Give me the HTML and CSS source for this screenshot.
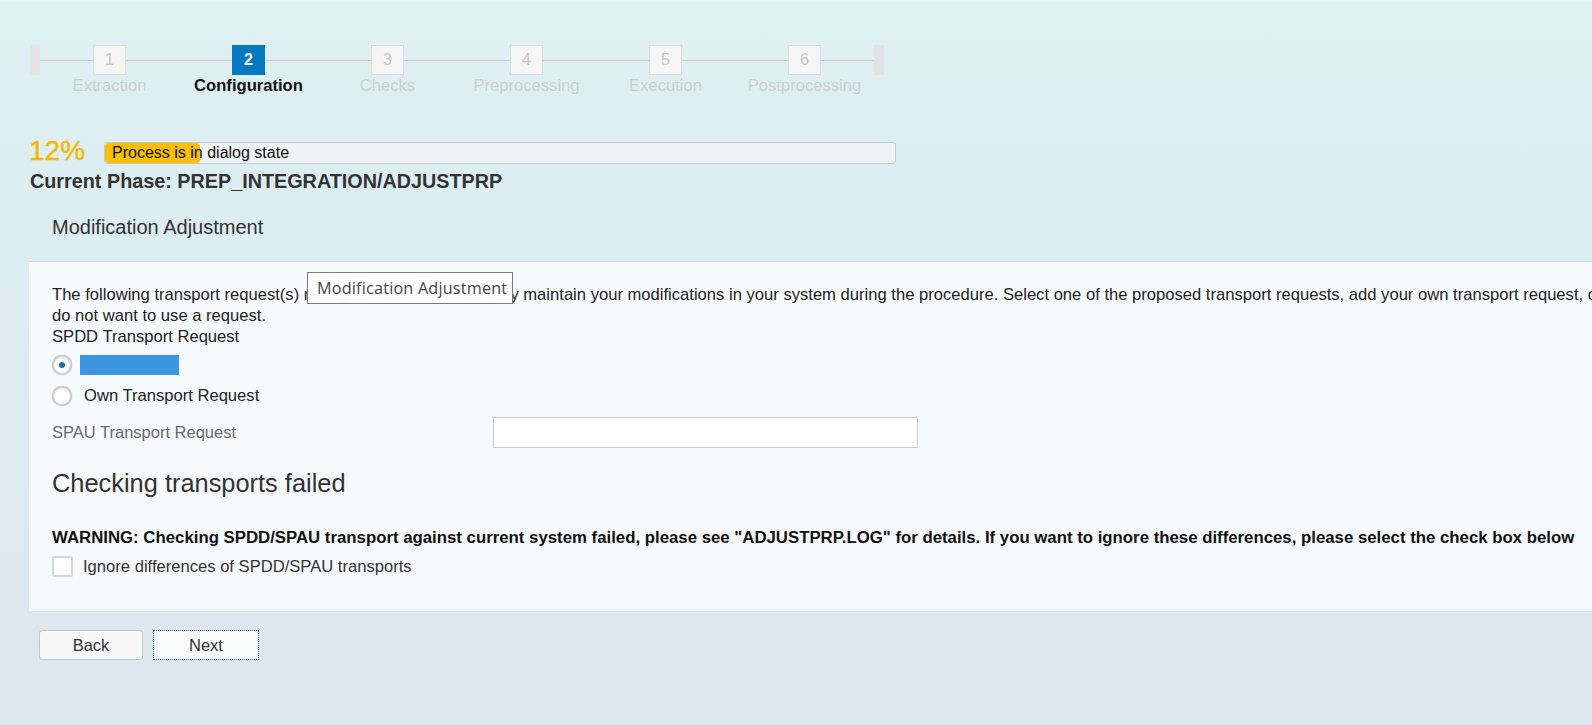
FILE: index.html
```html
<!DOCTYPE html>
<html lang="en">
<head>
  <meta charset="UTF-8" />
  <meta name="viewport" content="width=device-width, initial-scale=1.0" />
  <title>Software Update Manager - Configuration</title>
  <link rel="stylesheet" href="styles.css">
</head>
<body>
  <div class="page">
    <!-- Roadmap -->
    <div class="roadmap">
      <span class="cap"></span>
      <div class="step"><span class="num">1</span><span class="label">Extraction</span></div>
      <div class="step active"><span class="num">2</span><span class="label">Configuration</span></div>
      <div class="step"><span class="num">3</span><span class="label">Checks</span></div>
      <div class="step"><span class="num">4</span><span class="label">Preprocessing</span></div>
      <div class="step"><span class="num">5</span><span class="label">Execution</span></div>
      <div class="step"><span class="num">6</span><span class="label">Postprocessing</span></div>
      <span class="cap"></span>
    </div>

    <!-- Progress -->
    <div class="progress">
      <span class="percent">12%</span>
      <div class="bar">
        <div class="fill" style="width: 12%"></div>
        <span class="bar-text">Process is in dialog state</span>
      </div>
    </div>
    <div class="phase">Current Phase: PREP_INTEGRATION/ADJUSTPRP</div>

    <div class="section-title">Modification Adjustment</div>

    <!-- Dialog panel -->
    <div class="panel">
      <p class="intro">The following transport request(s) may be used to automatically maintain your modifications in your system during the procedure. Select one of the proposed transport requests, add your own transport request, or indicate that you<br>do not want to use a request.</p>
      <div class="field-title">SPDD Transport Request</div>
      <label class="radio-row"><span class="radio checked"></span><span class="req-chip"></span></label>
      <label class="radio-row"><span class="radio"></span><span class="radio-text">Own Transport Request</span></label>
      <div class="spau-row">
        <span class="spau-label">SPAU Transport Request</span>
        <input class="spau-input" type="text">
      </div>
      <h2 class="fail-title">Checking transports failed</h2>
      <p class="warning">WARNING: Checking SPDD/SPAU transport against current system failed, please see "ADJUSTPRP.LOG" for details. If you want to ignore these differences, please select the check box below</p>
      <label class="check-row"><span class="checkbox"></span><span class="check-text">Ignore differences of SPDD/SPAU transports</span></label>
    </div>

    <div class="actions">
      <button class="btn">Back</button>
      <button class="btn focused">Next</button>
    </div>

    <div class="tooltip">Modification Adjustment</div>
  </div>
</body>
</html>
```

FILE: styles.css
```css
html, body {
  margin: 0;
  height: 100%;
  overflow: hidden;
}
body {
  font-family: "Liberation Sans", Arial, sans-serif;
  color: #333;
  background: linear-gradient(to bottom, #dff0f3 0, #dcedf1 260px, #dee6ed 725px);
}
.page {
  position: relative;
  height: 100%;
  border-left: 2px solid #eaf2f5;
  border-top: 1px solid #e6f1f4;
  box-sizing: border-box;
  margin-left: -2px;
}

/* roadmap */
.roadmap {
  display: flex;
  align-items: flex-start;
  margin-top: 44px;
  padding-left: 30px;
}
.cap {
  width: 10px;
  height: 30px;
  background: #e3e3e3;
}
.step {
  position: relative;
  width: 139px;
  display: flex;
  flex-direction: column;
  align-items: center;
}
.step::before {
  content: "";
  position: absolute;
  left: 0;
  right: 0;
  top: 15px;
  height: 1px;
  background: #c9cdcf;
}
.num {
  position: relative;
  width: 33px;
  height: 30px;
  box-sizing: border-box;
  border: 1px solid #dcdcdc;
  background: #f5f5f5;
  color: #c6c6c6;
  font-size: 16px;
  line-height: 28px;
  text-align: center;
}
.label {
  font-size: 16.6px;
  line-height: 21px;
  color: #cbcfd1;
  white-space: nowrap;
}
.step.active .num {
  background: #0479c1;
  border-color: #0479c1;
  color: #fff;
  font-weight: bold;
}
.step.active .label {
  color: #111;
  font-weight: bold;
}

/* progress */
.progress {
  display: flex;
  align-items: flex-start;
  margin-top: 44px;
  padding-left: 29px;
}
.percent {
  font-size: 28px;
  line-height: 22px;
  color: #f5b800;
  -webkit-text-stroke: 0.4px #f5b800;
}
.bar {
  position: relative;
  width: 792px;
  height: 22px;
  box-sizing: border-box;
  margin: 2px 0 0 19px;
  border: 1px solid #c6c9cb;
  border-radius: 3px;
  background: #eef3f5;
}
.fill {
  position: absolute;
  left: 0;
  top: 0;
  bottom: 0;
  background: #fabf00;
  border-radius: 4px;
}
.bar-text {
  position: relative;
  display: block;
  padding-left: 7px;
  font-size: 16px;
  line-height: 20px;
  color: #111;
}
.phase {
  margin-top: 5px;
  padding-left: 30px;
  font-size: 19.8px;
  line-height: 24px;
  font-weight: bold;
  color: #333;
}
.section-title {
  margin-top: 22px;
  padding-left: 52px;
  font-size: 20px;
  line-height: 24px;
  color: #333;
}

/* panel */
.panel {
  margin: 22px 0 0 29px;
  width: 1900px;
  padding: 22px 0 34px 23px;
  background: #f7fafc;
  border-top: 1px solid #d3dce2;
  font-size: 16.6px;
  color: #222;
}
.intro {
  margin: 0;
  line-height: 21px;
}
.field-title {
  line-height: 21px;
}
.radio-row {
  display: flex;
  align-items: center;
  height: 21px;
  margin-top: 7px;
}
.radio-row + .radio-row {
  margin-top: 10px;
}
.radio {
  position: relative;
  width: 20px;
  height: 20px;
  box-sizing: border-box;
  border: 2px solid #d0d0d0;
  border-radius: 50%;
  background: #fff;
  box-shadow: 0 0 1px #8f8f8f, inset 0 1px 2px #e4e4e4;
}
.radio.checked::after {
  content: "";
  position: absolute;
  left: 5px;
  top: 5px;
  width: 6px;
  height: 6px;
  border-radius: 50%;
  background: #1470bf;
}
.req-chip {
  width: 99px;
  height: 20px;
  margin-left: 8px;
  background: #3b95e1;
}
.radio-text {
  margin-left: 12px;
}
.spau-row {
  display: flex;
  align-items: center;
  margin-top: 11px;
}
.spau-label {
  width: 441px;
  font-size: 16.5px;
  color: #6a6a6a;
}
.spau-input {
  width: 425px;
  height: 31px;
  box-sizing: border-box;
  margin: 0;
  border: 1px solid #c8cdd1;
  background: #fff;
}
.fail-title {
  margin: 20px 0 0;
  font-size: 25.4px;
  line-height: 30px;
  font-weight: normal;
  color: #333;
}
.warning {
  margin: 29px 0 0;
  font-size: 16.8px;
  font-weight: bold;
  line-height: 21px;
  color: #111;
  white-space: nowrap;
}
.check-row {
  display: flex;
  align-items: center;
  margin-top: 8px;
  height: 21px;
}
.checkbox {
  width: 21px;
  height: 21px;
  box-sizing: border-box;
  border: 2px solid #d6d6d6;
  border-radius: 2px;
  background: #fff;
}
.check-text {
  margin-left: 10px;
  color: #333;
}

/* buttons */
.actions {
  display: flex;
  gap: 10px;
  margin: 19px 0 0 39px;
}
.btn {
  width: 104px;
  height: 30px;
  padding: 0;
  border: 1px solid #c4c4c4;
  border-radius: 3px;
  background: #f7f7f7;
  font-family: "Liberation Sans", Arial, sans-serif;
  font-size: 16.5px;
  color: #333;
}
.btn.focused {
  border: 1px dotted #2e5f86;
  border-radius: 0;
  width: 106px;
  background: #f9fafa;
}

/* tooltip */
.tooltip {
  position: absolute;
  left: 307px;
  top: 271px;
  width: 206px;
  height: 32px;
  box-sizing: border-box;
  padding-left: 9px;
  border: 1px solid #7a7a7a;
  background: #fff;
  font-family: "Open Sans", sans-serif;
  font-size: 16.2px;
  line-height: 30px;
  letter-spacing: 0.2px;
  color: #444;
  white-space: nowrap;
}
```
